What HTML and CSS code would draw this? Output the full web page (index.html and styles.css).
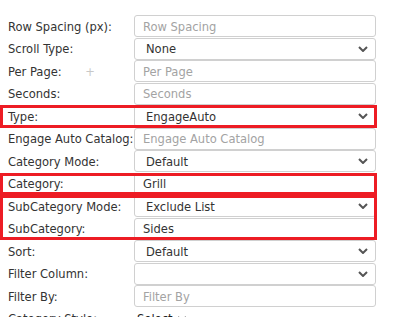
FILE: index.html
```html
<!DOCTYPE html>
<html lang="en">
<head>
    <meta charset="UTF-8">
    <meta name="viewport" content="width=device-width, initial-scale=1.0">
    <title>Feed Settings</title>
    <link rel="stylesheet" href="styles.css">
</head>
<body>
    <div id="settings">
        <div class="row">
            <label>Row Spacing (px):</label>
            <input type="text" placeholder="Row Spacing">
        </div>
        <div class="row">
            <label>Scroll Type:</label>
            <select><option>None</option></select>
        </div>
        <div class="row">
            <label>Per Page: <span class="add">+</span></label>
            <input type="text" placeholder="Per Page">
        </div>
        <div class="row">
            <label>Seconds:</label>
            <input type="text" placeholder="Seconds">
        </div>
        <div class="row marked">
            <label>Type:</label>
            <select><option>EngageAuto</option></select>
        </div>
        <div class="row">
            <label>Engage Auto Catalog:</label>
            <input type="text" placeholder="Engage Auto Catalog">
        </div>
        <div class="row">
            <label>Category Mode:</label>
            <select><option>Default</option></select>
        </div>
        <div class="row marked">
            <label>Category:</label>
            <input type="text" value="Grill">
        </div>
        <div class="group marked">
            <div class="row">
                <label>SubCategory Mode:</label>
                <select><option>Exclude List</option></select>
            </div>
            <div class="row">
                <label>SubCategory:</label>
                <input type="text" value="Sides">
            </div>
        </div>
        <div class="row">
            <label>Sort:</label>
            <select><option>Default</option></select>
        </div>
        <div class="row">
            <label>Filter Column:</label>
            <select><option></option></select>
        </div>
        <div class="row">
            <label>Filter By:</label>
            <input type="text" placeholder="Filter By">
        </div>
        <div class="row">
            <label>Category Style:</label>
            <select class="small"><option>Select</option></select>
        </div>
    </div>
</body>
</html>
```

FILE: styles.css
```css
body {
    font-family: 'DejaVu Sans Condensed', 'DejaVu Sans', sans-serif;
    font-size: 12.8px;
    color: #333;
    background-color: white;
    margin: 0;
    padding: 15px 8px 0 8px;
}
#settings {
    width: 368px;
}
.row {
    display: flex;
    align-items: center;
    height: 22.5px;
}
.row label {
    width: 126px;
    flex-shrink: 0;
    white-space: nowrap;
}
.add {
    color: #c8c8c8;
    margin-left: 20px;
}
.row input, .row select {
    width: 242px;
    height: 22px;
    box-sizing: border-box;
    border: 1px solid #d0d0d0;
    border-radius: 3px;
    font-family: inherit;
    font-size: 12.8px;
    color: #333;
    background-color: white;
    margin: 0;
}
.row input {
    padding: 0 8px;
}
.row input::placeholder {
    color: #a3a3a3;
}
.row select {
    appearance: none;
    -webkit-appearance: none;
    padding: 0 24px 0 11px;
    background-image: url("data:image/svg+xml,%3Csvg xmlns='http://www.w3.org/2000/svg' width='10' height='6' viewBox='0 0 10 6'%3E%3Cpath d='M1 1l4 4 4-4' fill='none' stroke='%23555' stroke-width='2'/%3E%3C/svg%3E");
    background-repeat: no-repeat;
    background-position: right 7px center;
}
.row select.small {
    width: 60px;
    border: none;
    padding: 0 0 0 3px;
    background-position: right 7px center;
    color: #222;
}
.marked {
    position: relative;
}
.marked::after {
    content: "";
    position: absolute;
    top: 0;
    bottom: 0;
    left: -8px;
    right: -1px;
    border: 3px solid #ed1c24;
    pointer-events: none;
}
```
